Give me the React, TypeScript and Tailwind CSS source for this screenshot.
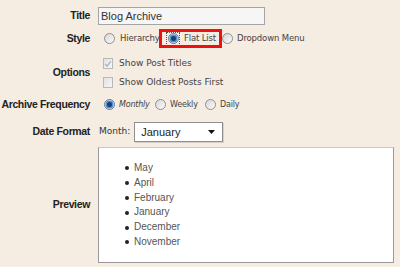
import React from "react";

const small = { fontFamily: "'DejaVu Sans', Verdana, sans-serif" };
const arial = { fontFamily: "'Liberation Sans', Arial, sans-serif" };

function Radio({ checked = false }: { checked?: boolean }) {
  return (
    <span
      className={`flex h-[11px] w-[11px] shrink-0 items-center justify-center rounded-full border ${
        checked ? "border-[#6b7a8a] bg-[#e8eef5]" : "border-[#8e8f8f] bg-gradient-to-br from-[#d6d6d6] to-[#fbfbfb]"
      }`}
    >
      {checked && <span className="h-[5px] w-[5px] rounded-full bg-[#173f73] ring-[1.5px] ring-[#4f8fd0]" />}
    </span>
  );
}

function Checkbox({ checked = false }: { checked?: boolean }) {
  return (
    <span className="flex h-[11px] w-[10px] shrink-0 items-center justify-center border border-[#b9b9b9] bg-gradient-to-br from-[#e2e2e2] to-[#f6f6f6]">
      {checked && (
        <svg width="8" height="8" viewBox="0 0 8 8">
          <path d="M1.2 4 L3.1 6.2 L6.8 1.3" fill="none" stroke="#a7b3c5" strokeWidth="1.3" />
        </svg>
      )}
    </span>
  );
}

function Label({ children }: { children: React.ReactNode }) {
  return (
    <div className="w-[90px] shrink-0 whitespace-nowrap text-right text-[10.5px] font-bold tracking-[-0.35px] text-[#222]" style={arial}>
      {children}
    </div>
  );
}

export default function App() {
  const months = ["May", "April", "February", "January", "December", "November"];
  return (
    <div className="h-[267px] w-[400px] overflow-hidden bg-[#f5ece2] pt-[7px]">
      {/* Title */}
      <div className="flex h-[18px] items-center">
        <Label>Title</Label>
        <div className="ml-[8px] flex h-[18px] w-[167px] items-center border border-[#a4a4a4] bg-[#f6f6f6] px-[2px] text-[11px] text-[#333]" style={arial}>
          Blog Archive
        </div>
      </div>

      {/* Style */}
      <div className="mt-[4px] flex h-[19px] items-center">
        <Label>Style</Label>
        <div className="ml-[14px] flex items-center whitespace-nowrap text-[8.5px] tracking-[-0.15px] text-[#444]" style={small}>
          <Radio />
          <span className="ml-[5px] w-[39px]">Hierarchy</span>
          <span className="flex h-[19px] w-[63px] items-center border-[3px] border-[#ee1111] pl-[4px]">
            <span className="flex h-[14px] w-[14px] items-center justify-center border border-dotted border-[#555]">
              <Radio checked />
            </span>
            <span className="ml-[4px]">Flat List</span>
          </span>
          <Radio />
          <span className="ml-[4px]">Dropdown Menu</span>
        </div>
      </div>

      {/* Options */}
      <div className="mt-[6px] flex h-[38px] items-center">
        <Label>Options</Label>
        <div className="ml-[13px] flex flex-col text-[9px] text-[#444]" style={small}>
          <div className="flex h-[19px] items-center">
            <Checkbox checked />
            <span className="ml-[6px]">Show Post Titles</span>
          </div>
          <div className="flex h-[19px] items-center">
            <Checkbox />
            <span className="ml-[6px]">Show Oldest Posts First</span>
          </div>
        </div>
      </div>

      {/* Archive Frequency */}
      <div className="mt-[4px] flex h-[17px] items-center">
        <Label>Archive Frequency</Label>
        <div className="ml-[14px] flex items-center whitespace-nowrap text-[8px] tracking-[-0.2px] text-[#444]" style={small}>
          <Radio checked />
          <span className="ml-[4px] w-[36px] italic">Monthly</span>
          <Radio />
          <span className="ml-[4px] w-[35px]">Weekly</span>
          <Radio />
          <span className="ml-[4px]">Daily</span>
        </div>
      </div>

      {/* Date Format */}
      <div className="mt-[9px] flex h-[20px] items-center">
        <Label>Date Format</Label>
        <div className="ml-[9px] flex items-center">
          <span className="text-[9px] text-[#333]" style={small}>Month:</span>
          <div className="ml-[4px] flex h-[20px] w-[89px] items-center justify-between border border-[#8f8f8f] bg-white pl-[6px] pr-[7px] text-[11px] text-[#222] shadow-[1px_1px_0_#d8d0c8]" style={arial}>
            <span>January</span>
            <svg width="7" height="4" viewBox="0 0 7 4">
              <path d="M0 0 H7 L3.5 4 Z" fill="#111" />
            </svg>
          </div>
        </div>
      </div>

      {/* Preview */}
      <div className="mt-[5px] flex h-[116px] items-center">
        <Label>Preview</Label>
        <div className="ml-[8px] h-[116px] w-[296px] border border-[#9a9a9a] border-t-[#c8c8c8] bg-white pt-[13px]" style={arial}>
          <ul className="text-[10px] leading-[14.8px] text-[#555]">
            {months.map((m) => (
              <li key={m} className="flex items-center">
                <span className="ml-[26px] mr-[5px] h-[4px] w-[4px] rounded-full bg-[#222]" />
                {m}
              </li>
            ))}
          </ul>
        </div>
      </div>
    </div>
  );
}
